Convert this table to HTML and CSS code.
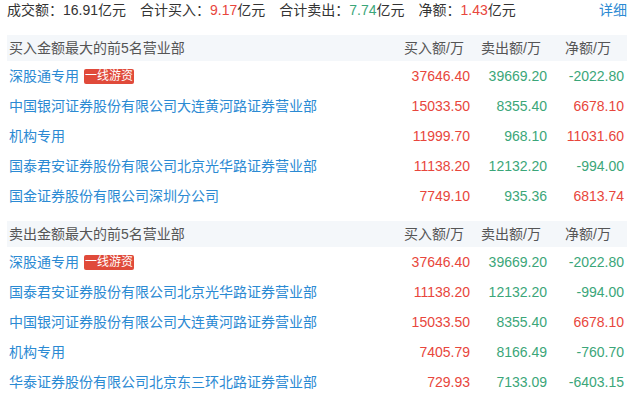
FILE: index.html
```html
<!DOCTYPE html>
<html lang="zh-CN">
<head>
<meta charset="utf-8">
<title>龙虎榜</title>
<link rel="stylesheet" href="styles.css">
</head>
<body>
<div class="page">
  <div class="summary">
    <span class="item">成交额：16.91亿元</span>
    <span class="item">合计买入：<span class="up">9.17</span>亿元</span>
    <span class="item">合计卖出：<span class="down">7.74</span>亿元</span>
    <span class="item">净额：<span class="up">1.43</span>亿元</span>
    <a class="more">详细</a>
  </div>

  <div class="section">
    <div class="row head">
      <div class="name">买入金额最大的前5名营业部</div>
      <div class="th">买入额/万</div>
      <div class="th">卖出额/万</div>
      <div class="th">净额/万</div>
    </div>
    <div class="row">
      <div class="name"><a class="link">深股通专用</a><span class="badge">一线游资</span></div>
      <div class="num up">37646.40</div>
      <div class="num down">39669.20</div>
      <div class="num down">-2022.80</div>
    </div>
    <div class="row">
      <div class="name"><a class="link">中国银河证券股份有限公司大连黄河路证券营业部</a></div>
      <div class="num up">15033.50</div>
      <div class="num down">8355.40</div>
      <div class="num up">6678.10</div>
    </div>
    <div class="row">
      <div class="name"><a class="link">机构专用</a></div>
      <div class="num up">11999.70</div>
      <div class="num down">968.10</div>
      <div class="num up">11031.60</div>
    </div>
    <div class="row">
      <div class="name"><a class="link">国泰君安证券股份有限公司北京光华路证券营业部</a></div>
      <div class="num up">11138.20</div>
      <div class="num down">12132.20</div>
      <div class="num down">-994.00</div>
    </div>
    <div class="row">
      <div class="name"><a class="link">国金证券股份有限公司深圳分公司</a></div>
      <div class="num up">7749.10</div>
      <div class="num down">935.36</div>
      <div class="num up">6813.74</div>
    </div>
  </div>

  <div class="section">
    <div class="row head">
      <div class="name">卖出金额最大的前5名营业部</div>
      <div class="th">买入额/万</div>
      <div class="th">卖出额/万</div>
      <div class="th">净额/万</div>
    </div>
    <div class="row">
      <div class="name"><a class="link">深股通专用</a><span class="badge">一线游资</span></div>
      <div class="num up">37646.40</div>
      <div class="num down">39669.20</div>
      <div class="num down">-2022.80</div>
    </div>
    <div class="row">
      <div class="name"><a class="link">国泰君安证券股份有限公司北京光华路证券营业部</a></div>
      <div class="num up">11138.20</div>
      <div class="num down">12132.20</div>
      <div class="num down">-994.00</div>
    </div>
    <div class="row">
      <div class="name"><a class="link">中国银河证券股份有限公司大连黄河路证券营业部</a></div>
      <div class="num up">15033.50</div>
      <div class="num down">8355.40</div>
      <div class="num up">6678.10</div>
    </div>
    <div class="row">
      <div class="name"><a class="link">机构专用</a></div>
      <div class="num up">7405.79</div>
      <div class="num down">8166.49</div>
      <div class="num down">-760.70</div>
    </div>
    <div class="row">
      <div class="name"><a class="link">华泰证券股份有限公司北京东三环北路证券营业部</a></div>
      <div class="num up">729.93</div>
      <div class="num down">7133.09</div>
      <div class="num down">-6403.15</div>
    </div>
  </div>
</div>
</body>
</html>
```

FILE: styles.css
```css
html, body {
  margin: 0;
  padding: 0;
  background: #ffffff;
}

body {
  font-family: "Liberation Sans", "Noto Sans CJK SC", sans-serif;
  font-size: 14px;
  color: #333333;
}

.page {
  padding: 0 10px 0 7px;
}

.summary {
  display: flex;
  align-items: center;
  height: 21px;
  line-height: 21px;
  margin-bottom: 14px;
  white-space: nowrap;
}

.summary .item {
  margin-right: 14px;
}

.summary .more {
  margin-left: auto;
  color: #2b8ad3;
  cursor: pointer;
}

.section + .section {
  margin-top: 10px;
}

.row {
  display: grid;
  grid-template-columns: 1fr 77px 77px 77px;
  align-items: center;
  height: 30px;
  line-height: 30px;
  padding-right: 3px;
  white-space: nowrap;
}

.row.head {
  height: 26px;
  line-height: 26px;
  background: #f4f7fa;
  color: #555555;
}

.name {
  padding-left: 2px;
  display: flex;
  align-items: center;
}

.th {
  text-align: center;
  padding-left: 5px;
}

.num {
  text-align: right;
}

.link {
  color: #2b8ad3;
  cursor: pointer;
}

.badge {
  display: inline-block;
  margin-left: 5px;
  padding: 0 1px;
  height: 15px;
  line-height: 15px;
  font-size: 12px;
  color: #ffffff;
  background: #e04a3a;
  border-radius: 2px;
}

.up {
  color: #e8463c;
}

.down {
  color: #3ba679;
}
```
